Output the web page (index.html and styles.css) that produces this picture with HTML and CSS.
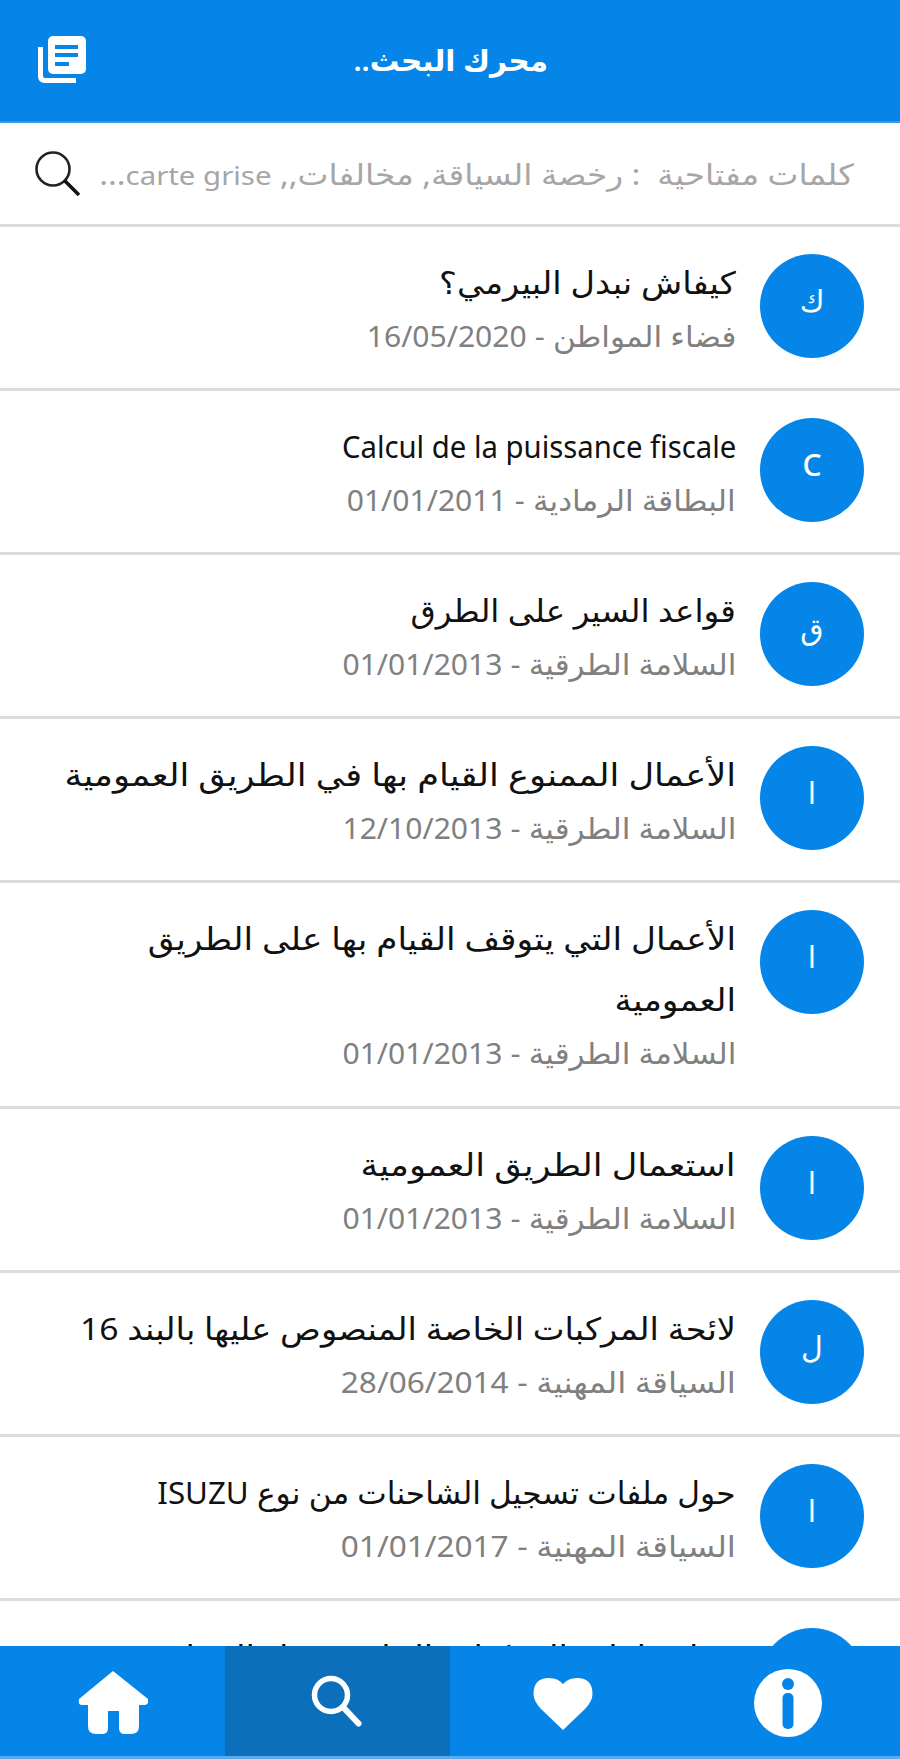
FILE: index.html
```
<!DOCTYPE html>
<html lang="ar" dir="rtl">
<head>
    <meta charset="UTF-8">
    <meta name="viewport" content="width=device-width, initial-scale=1.0">
    <title>محرك البحث</title>
    <link rel="stylesheet" href="styles.css">
</head>
<body>

<div class="app">
    <header class="header">
        <h1 class="header-title">محرك البحث..</h1>
        <svg class="header-icon" viewBox="0 0 48 48">
            <path d="M2.500 11v29q0 4.500 4.500 4.500h31" fill="none" stroke="#fff" stroke-width="5"/>
            <rect x="10" y="0" width="38" height="38" rx="5" fill="#fff"/>
            <path d="M17 11h23M17 19h23M17 28h14" stroke="#0585e8" stroke-width="4"/>
        </svg>
    </header>

    <div class="search">
        <span class="search-text">كلمات مفتاحية&nbsp; : رخصة السياقة, مخالفات,, <bdi>carte grise</bdi>...</span>
        <svg class="search-icon" viewBox="0 0 46 46">
            <circle cx="18" cy="18" r="16.500" fill="none" stroke="#222" stroke-width="2.600"/>
            <path d="M29.500 29.500L44 44" stroke="#111" stroke-width="3.500"/>
        </svg>
    </div>

    <main class="list">
        <div class="item">
            <div class="avatar">ك</div>
            <div class="item-body">
                <p class="item-title wide-2">كيفاش نبدل البيرمي؟</p>
                <p class="item-info">فضاء المواطن - <bdi>16/05/2020</bdi></p>
            </div>
        </div>
        <div class="item">
            <div class="avatar">C</div>
            <div class="item-body">
                <p class="item-title narrow">Calcul de la puissance fiscale</p>
                <p class="item-info">البطاقة الرمادية - <bdi>01/01/2011</bdi></p>
            </div>
        </div>
        <div class="item">
            <div class="avatar">ق</div>
            <div class="item-body">
                <p class="item-title wide-1">قواعد السير على الطرق</p>
                <p class="item-info">السلامة الطرقية - <bdi>01/01/2013</bdi></p>
            </div>
        </div>
        <div class="item">
            <div class="avatar">ا</div>
            <div class="item-body">
                <p class="item-title wide-4">الأعمال الممنوع القيام بها في الطريق العمومية</p>
                <p class="item-info">السلامة الطرقية - <bdi>12/10/2013</bdi></p>
            </div>
        </div>
        <div class="item item-tall">
            <div class="avatar">ا</div>
            <div class="item-body">
                <p class="item-title wide-3">الأعمال التي يتوقف القيام بها على الطريق<br>العمومية</p>
                <p class="item-info">السلامة الطرقية - <bdi>01/01/2013</bdi></p>
            </div>
        </div>
        <div class="item">
            <div class="avatar">ا</div>
            <div class="item-body">
                <p class="item-title wide-4">استعمال الطريق العمومية</p>
                <p class="item-info">السلامة الطرقية - <bdi>01/01/2013</bdi></p>
            </div>
        </div>
        <div class="item">
            <div class="avatar">ل</div>
            <div class="item-body">
                <p class="item-title wide-2">لائحة المركبات الخاصة المنصوص عليها بالبند 16</p>
                <p class="item-info info-wide">السياقة المهنية - <bdi>28/06/2014</bdi></p>
            </div>
        </div>
        <div class="item">
            <div class="avatar">ا</div>
            <div class="item-body">
                <p class="item-title wide-0">حول ملفات تسجيل الشاحنات من نوع ISUZU</p>
                <p class="item-info info-wide">السياقة المهنية - <bdi>01/01/2017</bdi></p>
            </div>
        </div>
        <div class="item">
            <div class="avatar"></div>
            <div class="item-body">
                <p class="item-title wide-2">حول ملفات المركبات الخاصة بنقل البضائع</p>
            </div>
        </div>
    </main>

    <nav class="tabs">
        <div class="tab">
            <svg class="tab-icon" viewBox="0 0 70 70">
                <path d="M35 3L1 31q-1 6 3 6h6v21q0 8 8 8h6q6 0 6-6V43h11v17q0 6 6 6h6q8 0 8-8V37h6q4 0 3-6z" fill="#fff"/>
            </svg>
        </div>
        <div class="tab active">
            <svg class="tab-icon" viewBox="0 0 70 70">
                <circle cx="28" cy="27" r="16.500" fill="none" stroke="#fff" stroke-width="5.500"/>
                <path d="M40 39L55.500 55.500" stroke="#fff" stroke-width="6" stroke-linecap="round"/>
            </svg>
        </div>
        <div class="tab">
            <svg class="tab-icon" viewBox="0 0 70 70">
                <path d="M35 62L13 41Q5.500 33 5.500 26Q5.500 10 21 10Q30 10 35 16Q40 10 49 10Q64.500 10 64.500 26Q64.500 33 57 41z" fill="#fff"/>
            </svg>
        </div>
        <div class="tab">
            <svg class="tab-icon" viewBox="0 0 70 70">
                <circle cx="35" cy="35" r="34" fill="#fff"/>
                <circle cx="35" cy="16" r="6" fill="#0585e8"/>
                <rect x="29.500" y="25" width="11" height="36" rx="5" fill="#0585e8"/>
            </svg>
        </div>
    </nav>
</div>

</body>
</html>
```
FILE: styles.css
```
* {
    box-sizing: border-box;
}
body {
    margin: 0;
    background-color: #fff;
    font-family: "Noto Sans", "DejaVu Sans", sans-serif;
}
.app {
    display: flex;
    flex-direction: column;
    width: 900px;
    height: 1759px;
    overflow: hidden;
}
.header {
    display: flex;
    align-items: center;
    justify-content: space-between;
    height: 123px;
    padding: 0 352px 2px 38px;
    border-bottom: 2px solid #3d97dd;
    background-color: #0585e8;
    flex-shrink: 0;
}
.header-title {
    margin: 0;
    color: #fff;
    font-size: 29.5px;
    font-weight: 600;
    white-space: nowrap;
}
.header-icon {
    width: 48px;
    height: 48px;
}
.search {
    display: flex;
    align-items: center;
    justify-content: space-between;
    height: 104px;
    padding: 0 46px 0 35px;
    border-bottom: 3px solid #dcdcdc;
    flex-shrink: 0;
}
.search-text {
    color: #a6a6a6;
    font-size: 29px;
    white-space: nowrap;
    transform: scaleX(1.13);
    transform-origin: right;
}
.search-text bdi {
    font-size: 26px;
}
.search-icon {
    width: 46px;
    height: 46px;
}
.list {
    flex: 1;
    min-height: 0;
    overflow: hidden;
}
.item {
    display: flex;
    gap: 24px;
    height: 164px;
    padding: 27px 36px 0 0;
    border-bottom: 3px solid #dcdcdc;
}
.item-tall {
    height: 226px;
}
.avatar {
    display: flex;
    justify-content: center;
    width: 104px;
    height: 104px;
    border-radius: 50%;
    background-color: #0585e8;
    color: #fff;
    font-size: 30px;
    font-weight: 500;
    line-height: 94px;
    flex-shrink: 0;
}
.item-title,
.item-info {
    width: fit-content;
    margin: 0;
    white-space: nowrap;
    transform-origin: right;
}
.item-title {
    margin-top: -2px;
    color: #111;
    font-size: 31px;
    line-height: 61px;
}
.item-info {
    color: #808080;
    font-size: 29.5px;
    line-height: 46px;
    transform: scaleX(1.055);
}
.item-info bdi {
    font-size: 28.5px;
}
.info-wide {
    transform: scaleX(1.107);
}
.narrow {
    transform: scaleX(0.945);
}
.wide-0 {
    transform: scaleX(1.01);
}
.wide-1 {
    transform: scaleX(1.05);
}
.wide-2 {
    transform: scaleX(1.088);
}
.wide-3 {
    transform: scaleX(1.108);
}
.wide-4 {
    transform: scaleX(1.138);
}
.tabs {
    display: flex;
    direction: ltr;
    height: 113px;
    border-bottom: 3px solid #5aa9ec;
    background-color: #0585e8;
    flex-shrink: 0;
}
.tab {
    display: flex;
    align-items: center;
    justify-content: center;
    flex: 1;
    padding-top: 3px;
}
.active {
    background-color: #0b6fbb;
}
.tab-icon {
    width: 70px;
    height: 70px;
}
```
